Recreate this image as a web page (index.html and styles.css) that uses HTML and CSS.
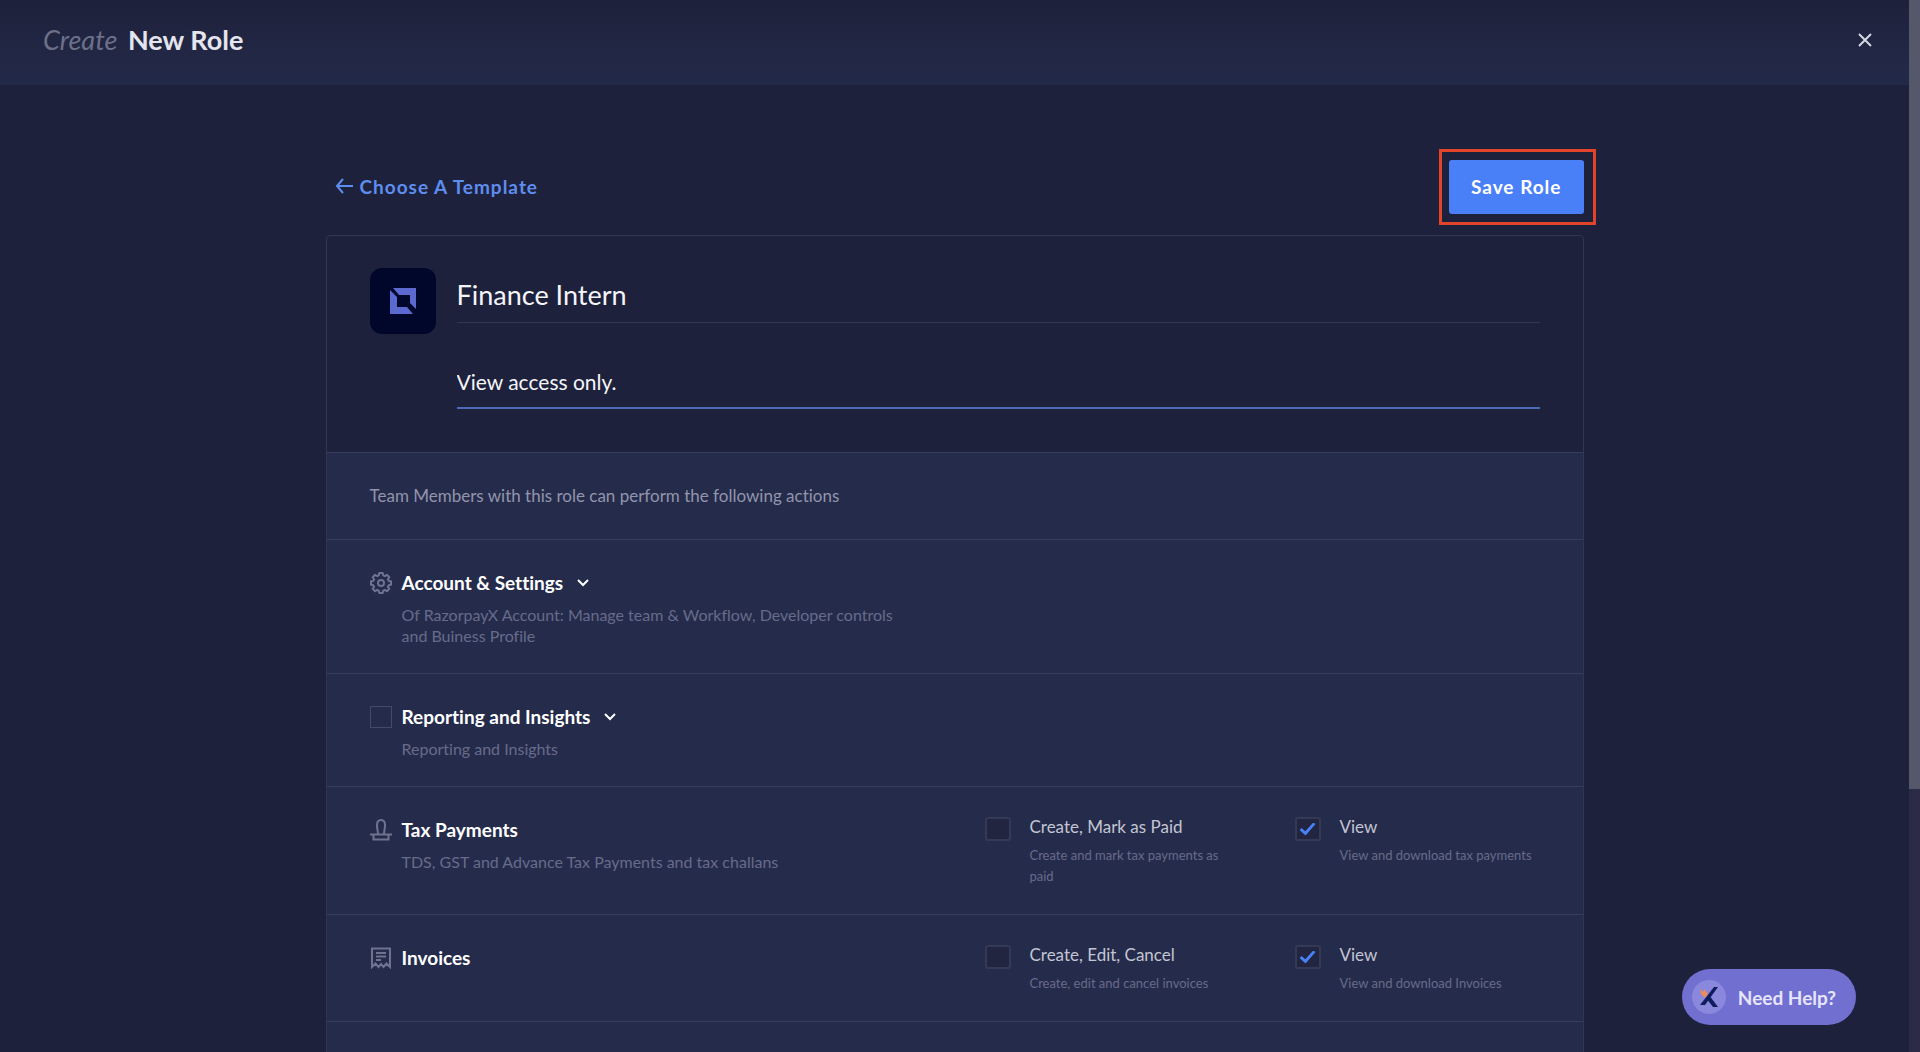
FILE: index.html
```html
<!DOCTYPE html>
<html lang="en">
<head>
<meta charset="utf-8">
<title>Create New Role</title>
<meta name="viewport" content="width=device-width, initial-scale=1">
<link rel="stylesheet" href="styles.css">
</head>
<body>
<div class="app">
  <div class="page">
    <header class="topbar">
      <h1 class="topbar-title"><em>Create</em> New Role</h1>
      <button class="close" type="button" aria-label="Close">
        <svg width="16" height="16" viewBox="0 0 16 16"><path d="M2 2l12 12M14 2L2 14" fill="none" stroke="currentColor" stroke-width="2"/></svg>
      </button>
    </header>

    <main class="content">
      <div class="actions">
        <a class="back" href="#">
          <svg width="18" height="16" viewBox="0 0 18 16"><path d="M8 1L2 8l6 7M2 8h16" fill="none" stroke="currentColor" stroke-width="2"/></svg>
          Choose A Template
        </a>
        <div class="save-wrap"><button class="save" type="button">Save Role</button></div>
      </div>

      <form class="card">
        <div class="role">
          <div class="role-logo">
            <svg width="26" height="26" viewBox="0 0 26 26"><path d="M3 0h23v21l-6-6V7H9z" fill="#5c6ad0"/><path d="M0 2l7 7v10h10l6 7H0z" fill="#5c6ad0"/></svg>
          </div>
          <div class="role-fields">
            <input class="role-name" type="text" aria-label="Role name" value="Finance Intern">
            <input class="role-desc" type="text" aria-label="Role description" value="View access only.">
          </div>
        </div>

        <p class="intro">Team Members with this role can perform the following actions</p>

        <section class="row">
          <div class="module">
            <svg class="icon" width="22" height="22" viewBox="0 0 22 22"><path d="M9.3 1h3.4l.5 2.4 1.7.7 2-1.3 2.4 2.4-1.4 2 .8 1.7 2.3.4v3.4l-2.3.5-.8 1.7 1.4 2-2.4 2.4-2-1.4-1.7.8-.5 2.3H9.3l-.5-2.3-1.7-.8-2 1.4-2.4-2.4 1.4-2-.8-1.7L1 12.700V9.300l2.300-.4.8-1.700-1.400-2 2.400-2.400 2 1.300 1.700-.7z" stroke-linejoin="round"/><circle cx="11" cy="11" r="3"/></svg>
            <div class="module-text">
              <h2>Account &amp; Settings <button class="expand" type="button" aria-label="Expand Account &amp; Settings"><svg width="12" height="10" viewBox="0 0 12 10"><path d="M1 2l5 5 5-5" fill="none" stroke="currentColor" stroke-width="2"/></svg></button></h2>
              <p>Of RazorpayX Account: Manage team &amp; Workflow, Developer controls and Buiness Profile</p>
            </div>
          </div>
        </section>

        <section class="row">
          <div class="module">
            <input class="module-check" type="checkbox" aria-labelledby="reporting">
            <div class="module-text">
              <h2><span id="reporting">Reporting and Insights</span> <button class="expand" type="button" aria-label="Expand Reporting and Insights"><svg width="12" height="10" viewBox="0 0 12 10"><path d="M1 2l5 5 5-5" fill="none" stroke="currentColor" stroke-width="2"/></svg></button></h2>
              <p>Reporting and Insights</p>
            </div>
          </div>
        </section>

        <section class="row">
          <div class="module">
            <svg class="icon" width="22" height="22" viewBox="0 0 22 22"><path d="M0 15.500h22M3.500 15.500v5h15v-5M8 15.500c0-3.500-1-5-1-9.500C7 3 8.500 1 11 1s4 2 4 5c0 4.500-1 6-1 9.500"/></svg>
            <div class="module-text">
              <h2>Tax Payments</h2>
              <p>TDS, GST and Advance Tax Payments and tax challans</p>
            </div>
          </div>
          <label class="perm"><input type="checkbox"><span class="perm-text"><b>Create, Mark as Paid</b><small>Create and mark tax payments as paid</small></span></label>
          <label class="perm"><input type="checkbox" checked><span class="perm-text"><b>View</b><small>View and download tax payments</small></span></label>
        </section>

        <section class="row">
          <div class="module">
            <svg class="icon" width="22" height="22" viewBox="0 0 22 22"><path d="M2 20V1.500h18V20l-3.500-3.500-3 3.500-2.500-3-2.500 3-3-3.500zM6 6h10M6 9.500h10M6 13h5"/></svg>
            <div class="module-text">
              <h2>Invoices</h2>
            </div>
          </div>
          <label class="perm"><input type="checkbox"><span class="perm-text"><b>Create, Edit, Cancel</b><small>Create, edit and cancel invoices</small></span></label>
          <label class="perm"><input type="checkbox" checked><span class="perm-text"><b>View</b><small>View and download Invoices</small></span></label>
        </section>

        <section class="row"></section>
      </form>
    </main>

    <button class="help" type="button">
      <svg width="34" height="34" viewBox="0 0 34 34"><circle cx="17" cy="17" r="17" fill="#8a88dc"/><path d="M8 9l3 3 1-3 4 5-3 4-4-4z" fill="#ee8a5c"/><path d="M22 7h4L13 25H8zM14 18l3-3 9 12h-5z" fill="#0f1d5c"/></svg>
      Need Help?
    </button>
  </div>
  <div class="scrollbar" aria-hidden="true"><div class="scrollbar-thumb"></div></div>
</div>
</body>
</html>
```
FILE: styles.css
```css
* {
  box-sizing: border-box;
}

body {
  margin: 0;
  background: #1e213b;
  color: #fff;
  font-family: Lato, "Liberation Sans", sans-serif;
  font-variant-ligatures: none;
}

h1, h2, p {
  margin: 0;
}

button {
  font: inherit;
  border: 0;
  padding: 0;
  background: none;
  color: inherit;
  cursor: pointer;
}

svg {
  display: block;
  flex: none;
}

.app {
  display: grid;
  grid-template-columns: minmax(0, 1fr) 11px;
  height: 100vh;
}

.page {
  overflow: hidden;
}

.scrollbar {
  background: #2b2b47;
}

.scrollbar-thumb {
  height: 75%;
  background: #55576b;
}

/* Header */
.topbar {
  display: flex;
  align-items: center;
  justify-content: space-between;
  height: 85px;
  padding: 0 36px 6px 43px;
  background: linear-gradient(#1e213b, #232a49);
}

.topbar-title {
  font-size: 27px;
  line-height: 32px;
  font-weight: 700;
  color: #e4e5ee;
}

.topbar-title em {
  margin-right: 4px;
  font-weight: 400;
  color: #6d7089;
}

.close {
  color: #d5d7e2;
}

/* Content */
.content {
  max-width: 1258px;
  margin: 0 auto;
  padding-top: 64px;
}

.actions {
  display: flex;
  align-items: center;
  justify-content: space-between;
  margin: 0 -12px 10px 9px;
}

.back {
  display: flex;
  align-items: center;
  gap: 7px;
  padding-bottom: 2px;
  color: #5e8df0;
  font-size: 19px;
  font-weight: 700;
  letter-spacing: 1px;
  text-decoration: none;
}

.save-wrap {
  padding: 8px 9px 8px 7px;
  border: 3px solid #e2442a;
}

.save {
  height: 54px;
  padding: 0 22px 2px;
  border-radius: 3px;
  background: #4a80f7;
  font-size: 19px;
  font-weight: 700;
  letter-spacing: 1px;
}

.card {
  border: 1px solid #323651;
  border-radius: 4px;
  overflow: hidden;
}

.role {
  display: flex;
  gap: 21px;
  padding: 32px 43px 43px;
}

.role-logo {
  display: grid;
  place-items: center;
  flex: none;
  width: 66px;
  height: 66px;
  border-radius: 12px;
  background: #01062b;
}

.role-fields {
  flex: 1;
}

.role-name,
.role-desc {
  display: block;
  width: 100%;
  padding: 0;
  border: 0;
  border-bottom: 1px solid #343751;
  background: none;
  color: #f4f5fa;
  font-family: inherit;
  outline: none;
}

.role-name {
  height: 55px;
  padding-bottom: 2px;
  font-size: 27px;
}

.role-desc {
  height: 54px;
  margin-top: 32px;
  border-bottom: 2px solid #4d6bb5;
  font-size: 21px;
}

/* Permission rows */
.intro,
.row {
  border-top: 1px solid #383d5c;
  background: #252b4b;
}

.intro {
  padding: 32px 43px;
  color: #9295ab;
  font-size: 17px;
  line-height: 22px;
}

.row {
  display: grid;
  grid-template-columns: minmax(0, 1fr) 310px 256px;
  align-items: start;
  min-height: 106px;
  padding: 30px 32px 27px 43px;
}

.module {
  display: flex;
  gap: 10px;
  padding-top: 2px;
}

.icon {
  fill: none;
  stroke: #6f7390;
  stroke-width: 2;
}

.module-text {
  max-width: 500px;
}

.module-text h2 {
  display: flex;
  align-items: center;
  gap: 14px;
  font-size: 19px;
  line-height: 22px;
  font-weight: 700;
}

.module-text p {
  margin-top: 10px;
  color: #676b8a;
  font-size: 16px;
  line-height: 21px;
}

input[type="checkbox"] {
  appearance: none;
  flex: none;
  display: grid;
  place-items: center;
  width: 26px;
  height: 24px;
  margin: 0;
  border: 2px solid #343957;
  border-radius: 3px;
  background: #22253f;
}

input[type="checkbox"]:checked::before {
  content: "";
  width: 16px;
  height: 13px;
  background: #4a80f7;
  clip-path: polygon(0 58%, 13% 43%, 36% 68%, 86% 0, 100% 11%, 38% 100%);
}

input.module-check {
  width: 22px;
  height: 22px;
  border: 1px solid #454a6b;
  border-radius: 0;
  background: none;
}

.perm {
  display: flex;
  gap: 19px;
}

.perm-text {
  width: 200px;
}

.perm-text b {
  display: block;
  color: #c3c5d3;
  font-size: 17px;
  font-weight: 400;
  line-height: 20px;
}

.perm-text small {
  display: block;
  margin-top: 8px;
  color: #676b8a;
  font-size: 13px;
  line-height: 21px;
}

/* Floating help */
.help {
  position: fixed;
  right: 64px;
  bottom: 27px;
  display: flex;
  align-items: center;
  gap: 12px;
  height: 56px;
  padding: 0 20px 0 10px;
  border-radius: 28px;
  background: #716fd0;
  color: #e6e5fa;
  font-size: 19px;
  font-weight: 700;
}
```
